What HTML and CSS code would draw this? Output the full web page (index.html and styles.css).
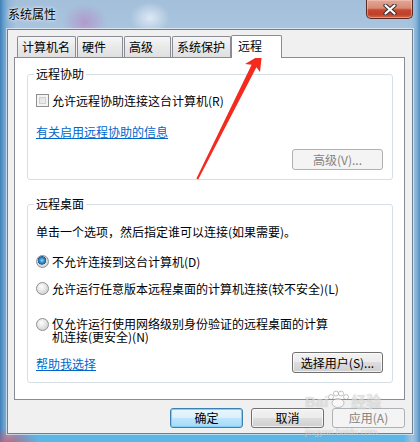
FILE: index.html
```html
<!DOCTYPE html>
<html lang="zh-CN">
<head>
<meta charset="utf-8">
<title>系统属性</title>
<link rel="stylesheet" href="styles.css">
</head>
<body>
<div class="window">
  <div class="titlebar">
    <span class="title">系统属性</span>
    <div class="close">
      <svg width="14" height="11" viewBox="0 0 14 11">
        <path d="M2.5 1.5 L11.5 9.5 M11.5 1.5 L2.5 9.5" stroke="#3a3030" stroke-width="4.2" stroke-linecap="round"/>
        <path d="M2.5 1.5 L11.5 9.5 M11.5 1.5 L2.5 9.5" stroke="#ffffff" stroke-width="2.2" stroke-linecap="round"/>
      </svg>
    </div>
  </div>
  <div class="client">
    <div class="tabs">
      <div class="tab t-wide">计算机名</div>
      <div class="tab t-2">硬件</div>
      <div class="tab t-3">高级</div>
      <div class="tab t-wide last">系统保护</div>
      <div class="tab active">远程</div>
    </div>
    <div class="panel">
      <fieldset class="group g1">
        <legend>远程协助</legend>
        <div class="row"><span class="checkbox"></span><span>允许远程协助连接这台计算机(R)</span></div>
        <a class="link l1">有关启用远程协助的信息</a>
        <div class="btnrow"><button class="btn disabled">高级(V)...</button></div>
      </fieldset>
      <fieldset class="group g2">
        <legend>远程桌面</legend>
        <div class="desc">单击一个选项，然后指定谁可以连接(如果需要)。</div>
        <div class="row r1"><span class="radio checked"></span><span>不允许连接到这台计算机(D)</span></div>
        <div class="row r2"><span class="radio"></span><span>允许运行任意版本远程桌面的计算机连接(较不安全)(L)</span></div>
        <div class="row r3"><span class="radio"></span><span class="wrap">仅允许运行使用网络级别身份验证的远程桌面的计算机连接(更安全)(N)</span></div>
        <div class="bottomrow"><a class="link">帮助我选择</a><button class="btn">选择用户(S)...</button></div>
      </fieldset>
    </div>
    <div class="footer">
      <button class="btn fbtn default">确定</button>
      <button class="btn fbtn">取消</button>
      <button class="btn fbtn disabled">应用(A)</button>
    </div>
  </div>
  <svg class="arrow" width="420" height="442" viewBox="0 0 420 442">
    <polygon points="262,54 260,72 256.4,67.2 198.2,179.4 196.4,178.6 251.6,64.8 245,64" fill="#f42a1e"/>
  </svg>
  <div class="watermark">
    <div class="wm-top">Bai<svg class="paw" width="26" height="18" viewBox="0 0 26 18"><g fill="rgba(255,255,255,0.55)" stroke="rgba(90,90,90,0.35)" stroke-width="1"><ellipse cx="13" cy="13" rx="6" ry="4.5"/><circle cx="6" cy="7" r="2.5"/><circle cx="11" cy="3.5" r="2.5"/><circle cx="16" cy="3.5" r="2.5"/><circle cx="21" cy="7" r="2.5"/></g></svg>经验</div>
    <div class="wm-bot">jingyan.baidu.com</div>
  </div>
</div>
</body>
</html>
```
FILE: styles.css
```css
* { box-sizing: border-box; margin: 0; padding: 0; }
html, body { width: 420px; height: 442px; overflow: hidden; }
body {
  font-family: "Noto Sans CJK SC", "Liberation Sans", sans-serif;
  font-size: 12px;
  color: #000;
  background: #fff;
}
.window {
  position: relative;
  width: 420px;
  height: 442px;
  background:
    radial-gradient(ellipse 22px 18px at 85px 22px, rgba(186, 120, 190, 0.55), transparent),
    radial-gradient(ellipse 20px 16px at 150px 18px, rgba(235, 242, 250, 0.8), transparent),
    radial-gradient(ellipse 30px 14px at 10px 442px, rgba(200, 90, 110, 0.8), transparent),
    linear-gradient(to right, #3f7fb8 0, #6aa2cf 4px, #8fb4d6 8px, rgba(143,180,214,0) 16px),
    linear-gradient(to left, #4f8fc4 0, #8ab4da 4px, #a4c2de 8px, rgba(164,194,222,0) 16px),
    linear-gradient(to bottom, #a3bfda 0, #a9c4de 29px, #6d9fcd 120px, #5a96c9 300px, #5db7e6 442px);
}
.titlebar {
  height: 29px;
  display: flex;
  justify-content: space-between;
  align-items: flex-start;
  padding: 0 7px 0 8px;
}
.title {
  margin-top: 7px;
  line-height: 14px;
  text-shadow: 0 0 5px rgba(255, 255, 255, 0.95), 0 0 2px rgba(255, 255, 255, 0.9);
}
.close {
  width: 47px;
  height: 19px;
  border: 1px solid #5b2a22;
  border-top: none;
  border-radius: 0 0 5px 5px;
  background: linear-gradient(#e2a897 0, #d88a76 45%, #c6492f 55%, #c0402a 80%, #d56a4a 100%);
  box-shadow: inset 0 0 0 1px rgba(255, 210, 200, 0.45);
  display: flex;
  align-items: center;
  justify-content: center;
}
.client {
  margin-left: 7px;
  width: 406px;
  height: 405px;
  border: 1px solid #6f8091;
  box-shadow: 0 0 0 1px rgba(255, 255, 255, 0.55);
  background: #f0f0f0;
  padding: 5px 7px 0 6px;
}
.tabs {
  display: flex;
  align-items: flex-end;
  height: 22px;
  padding-left: 3px;
}
.tab {
  height: 21px;
  border: 1px solid #898c95;
  border-bottom: none;
  border-radius: 2px 2px 0 0;
  background: linear-gradient(#f6f6f6, #e9e9e9 50%, #e0e0e0);
  padding-left: 4px;
  line-height: 19px;
  margin-right: 1px;
  white-space: nowrap;
}
.t-wide { width: 59px; }
.t-2 { width: 46px; }
.t-3 { width: 47px; }
.tab.last { margin-right: 0; }
.tab.active {
  position: relative;
  z-index: 1;
  width: 51px;
  height: 23px;
  margin-bottom: -1px;
  background: #fff;
  padding-left: 6px;
  line-height: 20px;
}
.panel {
  height: 343px;
  border: 1px solid #898c95;
  background: #fff;
  padding: 9px 11px 0 12px;
}
.group {
  border: 1px solid #d5dfe5;
  border-radius: 3px;
  padding: 0 9px 9px 8px;
}
.group legend {
  padding: 0 2px;
  margin-left: -2px;
  line-height: 14px;
}
.g1 { padding-top: 11px; }
.g2 { margin-top: 17px; padding-top: 13px; }
.row {
  display: flex;
  align-items: center;
  height: 16px;
  white-space: nowrap;
}
.checkbox {
  width: 13px;
  height: 13px;
  border: 1px solid #8f8f8f;
  background: linear-gradient(135deg, #dcdcdc, #f6f6f6);
  box-shadow: inset 0 0 0 2px #f4f4f4, inset 0 0 0 3px #d0d0d0;
  margin-right: 3px;
  flex: none;
}
.radio {
  width: 13px;
  height: 13px;
  border-radius: 50%;
  border: 1px solid #8f8f8f;
  background: radial-gradient(circle at 40% 35%, #ffffff, #d6d6d6 70%);
  margin-right: 3px;
  flex: none;
}
.radio.checked {
  background:
    radial-gradient(circle at 45% 40%, #9fd6f8 0, #3f97d5 2px, #1b5c93 4px, rgba(0,0,0,0) 4.5px),
    radial-gradient(circle, #f0f0f0, #c9c9c9);
}
.link {
  color: #0066cc;
  text-decoration: underline;
  line-height: 16px;
}
.l1 { display: block; margin-top: 16px; width: max-content; }
.btnrow {
  display: flex;
  justify-content: flex-end;
  margin-top: 9px;
}
.btn {
  font-family: inherit;
  font-size: 12px;
  color: #000;
  width: 91px;
  height: 21px;
  border: 1px solid #707070;
  border-radius: 3px;
  background: linear-gradient(#f2f2f2 0, #ebebeb 50%, #dddddd 50%, #cfcfcf 100%);
  box-shadow: inset 0 0 0 1px rgba(255, 255, 255, 0.7);
  line-height: 17px;
  padding: 0;
}
.btn.disabled {
  color: #838383;
  border-color: #adb2b5;
  background: #f4f4f4;
  box-shadow: none;
}
.desc { line-height: 16px; white-space: nowrap; }
.r1 { margin-top: 13px; }
.r2 { margin-top: 11px; }
.r3 {
  margin-top: 21px;
  height: auto;
  align-items: flex-start;
  white-space: normal;
}
.r3 .radio { margin-top: 1px; }
.wrap { width: 282px; line-height: 13px; }
.bottomrow {
  display: flex;
  justify-content: space-between;
  align-items: center;
  margin-top: 9px;
}
.bottomrow .link { margin-top: 3px; }
.footer {
  display: flex;
  justify-content: flex-end;
  gap: 8px;
  margin-top: 8px;
}
.fbtn { width: 73px; height: 20px; line-height: 16px; }
.fbtn.default {
  border-color: #3c7fb1;
  background: linear-gradient(#eaf6fd 0, #d9f0fc 50%, #bee6fd 50%, #a7d9f5 100%);
  box-shadow: inset 0 0 0 1px #7fd0f6;
}
.arrow {
  position: absolute;
  left: 0;
  top: 0;
  pointer-events: none;
}
.watermark {
  position: absolute;
  left: 305px;
  top: 393px;
  color: rgba(255, 255, 255, 0.55);
  text-shadow: 0 0 1px rgba(90, 90, 90, 0.4);
  pointer-events: none;
}
.wm-top {
  display: flex;
  align-items: center;
  font-family: "Liberation Sans", "Noto Sans CJK SC", sans-serif;
  font-size: 15px;
  font-weight: bold;
  line-height: 17px;
  height: 17px;
}
.wm-top .paw { margin: -6px 0 0 -3px; }
.wm-bot {
  font-family: "Liberation Sans", sans-serif;
  font-size: 9px;
  line-height: 10px;
  margin-top: 17px;
}
```
